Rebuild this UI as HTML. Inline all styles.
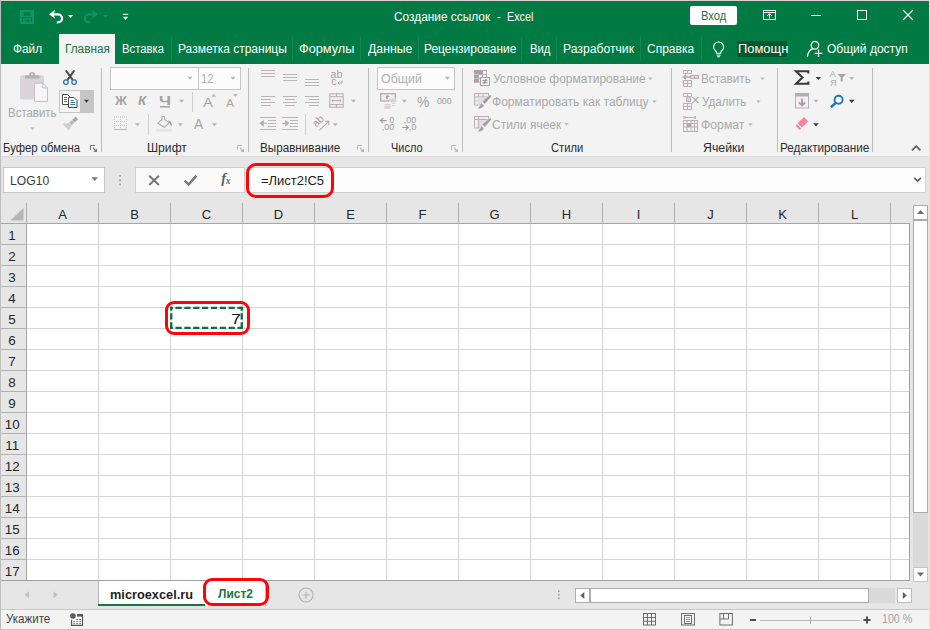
<!DOCTYPE html>
<html lang="ru"><head><meta charset="utf-8"><title>Создание ссылок - Excel</title><style>

html,body{margin:0;padding:0;}
body{width:930px;height:630px;overflow:hidden;position:relative;background:#e6e6e6;
 font-family:"Liberation Sans",sans-serif;}
.b{position:absolute;box-sizing:border-box;}
.t{position:absolute;white-space:nowrap;transform-origin:0 0;line-height:normal;}
svg{position:absolute;overflow:visible;}

</style></head><body>
<div class="b" style="left:0px;top:0px;width:930px;height:64px;background:#017a43;"></div>
<div class="b" style="left:59px;top:34px;width:56px;height:30px;background:#f3f3f3;"></div>
<div class="b" style="left:690px;top:6px;width:47px;height:19px;background:#fff;border-radius:2px;"></div>
<div class="b" style="left:737px;top:41px;width:50px;height:16px;background:#00592f;"></div>
<div class="b" style="left:171px;top:37px;width:1px;height:24px;background:#17844f;"></div>
<div class="b" style="left:292px;top:37px;width:1px;height:24px;background:#17844f;"></div>
<div class="b" style="left:360px;top:37px;width:1px;height:24px;background:#17844f;"></div>
<div class="b" style="left:418px;top:37px;width:1px;height:24px;background:#17844f;"></div>
<div class="b" style="left:521px;top:37px;width:1px;height:24px;background:#17844f;"></div>
<div class="b" style="left:556px;top:37px;width:1px;height:24px;background:#17844f;"></div>
<div class="b" style="left:640px;top:37px;width:1px;height:24px;background:#17844f;"></div>
<div class="b" style="left:701px;top:37px;width:1px;height:24px;background:#17844f;"></div>
<div class="b" style="left:0px;top:64px;width:930px;height:93px;background:#f3f3f3;border-bottom:1px solid #d9d9d9;"></div>
<div class="b" style="left:101px;top:68px;width:1px;height:84px;background:#bcbcbc;"></div>
<div class="b" style="left:248px;top:68px;width:1px;height:84px;background:#bcbcbc;"></div>
<div class="b" style="left:368px;top:68px;width:1px;height:84px;background:#bcbcbc;"></div>
<div class="b" style="left:462px;top:68px;width:1px;height:84px;background:#bcbcbc;"></div>
<div class="b" style="left:671px;top:68px;width:1px;height:84px;background:#bcbcbc;"></div>
<div class="b" style="left:777px;top:68px;width:1px;height:84px;background:#bcbcbc;"></div>
<div class="b" style="left:872px;top:68px;width:1px;height:84px;background:#bcbcbc;"></div>
<div class="b" style="left:59px;top:90px;width:22px;height:23px;background:#f3f3f3;border:1px solid #c6c6c6;"></div>
<div class="b" style="left:80px;top:90px;width:14px;height:23px;background:#c6c6c6;"></div>
<div class="b" style="left:110px;top:67px;width:89px;height:23px;background:#fcfcfc;border:1px solid #c6c6c6;"></div>
<div class="b" style="left:198px;top:67px;width:43px;height:23px;background:#fcfcfc;border:1px solid #c6c6c6;"></div>
<div class="b" style="left:192px;top:92px;width:1px;height:20px;background:#cfcfcf;"></div>
<div class="b" style="left:148px;top:114px;width:1px;height:21px;background:#cfcfcf;"></div>
<div class="b" style="left:305px;top:114px;width:1px;height:21px;background:#cfcfcf;"></div>
<div class="b" style="left:377px;top:67px;width:78px;height:23px;background:#fcfcfc;border:1px solid #c6c6c6;"></div>
<div class="b" style="left:3px;top:167px;width:102px;height:26px;background:#fff;border:1px solid #c8c8c8;"></div>
<div class="b" style="left:135px;top:167px;width:110px;height:26px;background:#fafafa;border:1px solid #d0d0d0;"></div>
<div class="b" style="left:246px;top:167px;width:680px;height:26px;background:#fdfdfd;border:1px solid #d0d0d0;"></div>
<div class="b" style="left:27px;top:224px;width:883px;height:357px;background-color:#fff;background-image:linear-gradient(to right,#d4d4d4 1px,transparent 1px),linear-gradient(to bottom,#d4d4d4 1px,transparent 1px);background-size:72px 21px;background-position:71px 20px;"></div>
<div class="b" style="left:1px;top:203px;width:909px;height:21px;background-color:#e6e6e6;background-image:linear-gradient(to right,#b2b2b2 1px,transparent 1px);background-size:72px 21px;background-position:25px 0;"></div>
<div class="b" style="left:1px;top:223px;width:909px;height:1px;background:#a6a6a6;"></div>
<div class="b" style="left:1px;top:224px;width:26px;height:357px;background-color:#e6e6e6;border-right:1px solid #a6a6a6;background-image:linear-gradient(to bottom,#b2b2b2 1px,transparent 1px);background-size:72px 21px;background-position:0 20px;"></div>
<div class="b" style="left:909px;top:224px;width:1px;height:357px;background:#a0a0a0;"></div>
<div class="b" style="left:1px;top:580px;width:909px;height:1px;background:#a0a0a0;"></div>
<div class="b" style="left:913px;top:205px;width:15px;height:15px;background:#fff;border:1px solid #adadad;"></div>
<div class="b" style="left:913px;top:220px;width:15px;height:293px;background:#fff;border:1px solid #ababab;"></div>
<div class="b" style="left:913px;top:513px;width:15px;height:54px;background:#dadada;"></div>
<div class="b" style="left:913px;top:567px;width:15px;height:15px;background:#fff;border:1px solid #c6c6c6;"></div>
<div class="b" style="left:575px;top:588px;width:15px;height:15px;background:#fff;border:1px solid #adadad;"></div>
<div class="b" style="left:590px;top:588px;width:279px;height:15px;background:#fff;border:1px solid #ababab;"></div>
<div class="b" style="left:869px;top:588px;width:26px;height:15px;background:#dadada;"></div>
<div class="b" style="left:897px;top:588px;width:15px;height:15px;background:#fff;border:1px solid #bdbdbd;"></div>
<div class="b" style="left:98px;top:581px;width:168px;height:25px;background:#fff;border-left:1px solid #b5b5b5;border-right:1px solid #b5b5b5;"></div>
<div class="b" style="left:98px;top:604px;width:107px;height:2px;background:#1e7145;"></div>
<div class="b" style="left:0px;top:609px;width:930px;height:21px;background:#f3f3f3;border-top:1px solid #c8c8c8;"></div>
<div class="b" style="left:0px;top:0px;width:930px;height:1px;background:#d9d3d6;"></div>
<div class="b" style="left:0px;top:0px;width:1px;height:630px;background:#bdbdbd;"></div>
<div class="b" style="left:929px;top:0px;width:1px;height:630px;background:#e4e4e4;"></div>
<div class="b" style="left:0px;top:629px;width:930px;height:1px;background:#c6c6c6;"></div>
<svg width="930" height="630" viewBox="0 0 930 630" style="left:0;top:0"><path d="M21 11h12v12h-12z" fill="none" stroke="#109468" stroke-width="2" />
<path d="M23 11v5.5h8v-5.5" fill="none" stroke="#109468" stroke-width="1.6" />
<path d="M24 23v-4h6v4M26 22.5v-1.5" fill="none" stroke="#109468" stroke-width="1.6" />
<path d="M55.300 9.800L49 14.300L55.300 18.800L53.600 14.300z" fill="#fff" />
<path d="M52.500 14.300H57.800a4.300 4 0 0 1 0 8H56.800" fill="none" stroke="#fff" stroke-width="2.2" />
<path d="M68.1 14.899999999999999h5l-2.5 3z" fill="#fff"/>
<path d="M91.700 9.800L98 14.300L91.700 18.800L93.400 14.300z" fill="#109468" />
<path d="M94.500 14.300H89.200a4.300 4 0 0 0 0 8H90.200" fill="none" stroke="#109468" stroke-width="2.2" />
<path d="M103.0 14.899999999999999h5l-2.5 3z" fill="#109468"/>
<path d="M122.8 14.3L128.2 14.3" stroke="#fff" stroke-width="1" fill="none"/>
<path d="M122.8 16.7h5.4l-2.7 3.2z" fill="#fff"/>
<rect x="763.5" y="10.5" width="12" height="9" fill="none" stroke="#fff" stroke-width="1" />
<path d="M763 12.5L776 12.5" stroke="#fff" stroke-width="1" fill="none"/>
<path d="M769.5 18.5v-4.5M767.3 15.8l2.2-2.2l2.2 2.2" fill="none" stroke="#fff" stroke-width="1" />
<path d="M811 15.5L821 15.5" stroke="#fff" stroke-width="1" fill="none"/>
<rect x="857.5" y="10.5" width="9" height="9" fill="none" stroke="#fff" stroke-width="1" />
<path d="M903 10L913 20M913 10L903 20" fill="none" stroke="#fff" stroke-width="1.1" />
<path d="M718.6 42a4.9 4.9 0 0 1 3.1 8.7c-.8.8-1 1.5-1 2.6h-4.2c0-1.100-.2-1.800-1-2.600a4.900 4.900 0 0 1 3.100-8.700z" fill="none" stroke="#fff" stroke-width="1.1" />
<path d="M716.6 55.1L720.6 55.1" stroke="#fff" stroke-width="1" fill="none"/>
<path d="M717.2 56.8L720 56.8" stroke="#fff" stroke-width="1" fill="none"/>
<path d="M815 49.200a3.900 3.900 0 1 0-.1 0M812.600 48.600c-2.600 1.200-4.800 4.400-5.200 8" fill="none" stroke="#fff" stroke-width="1.2" />
<path d="M818.5 49.500v7.600M814.700 53.300h7.600" fill="none" stroke="#fff" stroke-width="1.3" />
<rect x="20" y="75.5" width="24" height="24" fill="#dad3d7" rx="1.500"/>
<path d="M25 78.500v-3.300h4a3.100 3.100 0 0 1 6.200 0h4v3.300z" fill="#b7afb3" />
<circle cx="32.100" cy="74.300" r="1" fill="#ece7ea"/>
<path d="M34.500 83.200h8.300l4.700 4.700v13.600h-13z" fill="#f9f4f7" stroke="#c7bfc3" stroke-width="1" />
<path d="M42.800 83.200v4.700h4.700" fill="none" stroke="#c7bfc3" stroke-width="1" />
<path d="M30.0 127.30000000000001h5l-2.5 3z" fill="#c4c4c4"/>
<path d="M65.800 70.300L72.900 80.200M74.400 70.300L67.300 80.200" fill="none" stroke="#4c4c4c" stroke-width="2" />
<circle cx="65.9" cy="82.1" r="2.3" fill="none" stroke="#2e75b6" stroke-width="1.3"/>
<circle cx="74.1" cy="82.1" r="2.3" fill="none" stroke="#2e75b6" stroke-width="1.3"/>
<path d="M62.500 94.500h5l2.500 2.500v7.500h-7.500z" fill="#fff" stroke="#4a4a4a" stroke-width="1" />
<path d="M68.500 97.500h5.500l3 3v7h-8.500z" fill="#fff" stroke="#4a4a4a" stroke-width="1" />
<path d="M64 97.5L67 97.5" stroke="#2e75b6" stroke-width="1" fill="none"/>
<path d="M64 99.5L67 99.5" stroke="#2e75b6" stroke-width="1" fill="none"/>
<path d="M64 101.5L67 101.5" stroke="#2e75b6" stroke-width="1" fill="none"/>
<path d="M70.5 102.5L75 102.5" stroke="#2e75b6" stroke-width="1" fill="none"/>
<path d="M70.5 104.5L75 104.5" stroke="#2e75b6" stroke-width="1" fill="none"/>
<path d="M70.5 100.5L73.5 100.5" stroke="#2e75b6" stroke-width="1" fill="none"/>
<path d="M84.0 99.8h5l-2.5 3z" fill="#3a3a3a"/>
<path d="M75.600 116.700l2.500 2.500l-3.500 3.200l-2.500-2.500z" fill="#aba3a7" />
<path d="M71.700 120.200l2.600 2.600l-2.600 2.500l-2.600-2.600z" fill="#bdb5b9" />
<path d="M68.700 123.100l2.700 2.700l-2.300 4.800l-6.900-6.800z" fill="#d3cbcf" />
<path d="M90.5 150V145.5H95" fill="none" stroke="#777" stroke-width="1" />
<path d="M93 148L96.5 151.5" fill="none" stroke="#777" stroke-width="1.2" />
<path d="M97 148.5V152H93.5z" fill="#777" />
<path d="M237.5 150V145.5H242" fill="none" stroke="#b9b9b9" stroke-width="1" />
<path d="M240 148L243.5 151.5" fill="none" stroke="#b9b9b9" stroke-width="1.2" />
<path d="M244 148.5V152H240.5z" fill="#b9b9b9" />
<path d="M357.5 150V145.5H362" fill="none" stroke="#b9b9b9" stroke-width="1" />
<path d="M360 148L363.5 151.5" fill="none" stroke="#b9b9b9" stroke-width="1.2" />
<path d="M364 148.5V152H360.5z" fill="#b9b9b9" />
<path d="M451.5 150V145.5H456" fill="none" stroke="#b9b9b9" stroke-width="1" />
<path d="M454 148L457.5 151.5" fill="none" stroke="#b9b9b9" stroke-width="1.2" />
<path d="M458 148.5V152H454.5z" fill="#b9b9b9" />
<path d="M187.5 76.7h5l-2.5 3z" fill="#b5b5b5"/>
<path d="M230.5 76.7h5l-2.5 3z" fill="#b5b5b5"/>
<path d="M160 106.8L170 106.8" stroke="#a3a3a3" stroke-width="1.5" fill="none"/>
<path d="M179.0 99.8h5l-2.5 3z" fill="#b5b5b5"/>
<path d="M211.2 96.7h5l-2.5 -3z" fill="#b5b5b5"/>
<path d="M232.8 93.9h5l-2.5 3z" fill="#b5b5b5"/>
<path d="M114 117H127" stroke="#cbbfc6" stroke-width="1" stroke-dasharray="1 1" fill="none"/>
<path d="M114 121.5H127" stroke="#cbbfc6" stroke-width="1" stroke-dasharray="1 1" fill="none"/>
<path d="M114 125.5H127" stroke="#cbbfc6" stroke-width="1" stroke-dasharray="1 1" fill="none"/>
<path d="M114.5 117V129" stroke="#cbbfc6" stroke-width="1" stroke-dasharray="1 1" fill="none"/>
<path d="M120.5 117V129" stroke="#cbbfc6" stroke-width="1" stroke-dasharray="1 1" fill="none"/>
<path d="M126.5 117V129" stroke="#cbbfc6" stroke-width="1" stroke-dasharray="1 1" fill="none"/>
<path d="M114 129.5L127 129.5" stroke="#c3b9be" stroke-width="1.2" fill="none"/>
<path d="M134.9 123.3h5l-2.5 3z" fill="#b5b5b5"/>
<path d="M163 118.400l6.300 4.200l-5 4.700l-6.300-4.200z" fill="#f6f1f4" stroke="#aea6aa" stroke-width="1.1" />
<path d="M161.900 121v-4.600h2.600v3.400" fill="#f3f3f3" stroke="#aea6aa" stroke-width="1" />
<path d="M168.300 120.300c2.600.600 3.900 3 3.600 6.600c-1.300-1.700-1.900-3-2.600-4.300z" fill="#a59da1" />
<rect x="156" y="128.8" width="16" height="3" fill="#e9e1e5" />
<path d="M177.8 123.3h5l-2.5 3z" fill="#b5b5b5"/>
<path d="M212.0 123.3h5l-2.5 3z" fill="#b5b5b5"/>
<path d="M261 70.5L275 70.5" stroke="#bcb4b8" stroke-width="1" fill="none"/>
<path d="M261 73.5L275 73.5" stroke="#bcb4b8" stroke-width="1" fill="none"/>
<path d="M261 76.5L275 76.5" stroke="#bcb4b8" stroke-width="1" fill="none"/>
<path d="M283 74.5L297 74.5" stroke="#bcb4b8" stroke-width="1" fill="none"/>
<path d="M283 77.5L297 77.5" stroke="#bcb4b8" stroke-width="1" fill="none"/>
<path d="M283 80.5L297 80.5" stroke="#bcb4b8" stroke-width="1" fill="none"/>
<path d="M305 79.5L319 79.5" stroke="#bcb4b8" stroke-width="1" fill="none"/>
<path d="M305 82.5L319 82.5" stroke="#bcb4b8" stroke-width="1" fill="none"/>
<path d="M305 85.5L319 85.5" stroke="#bcb4b8" stroke-width="1" fill="none"/>
<path d="M261 96.5L275 96.5" stroke="#bcb4b8" stroke-width="1" fill="none"/>
<path d="M283 96.5L297 96.5" stroke="#bcb4b8" stroke-width="1" fill="none"/>
<path d="M305 96.5L319 96.5" stroke="#bcb4b8" stroke-width="1" fill="none"/>
<path d="M261 99.5L271 99.5" stroke="#bcb4b8" stroke-width="1" fill="none"/>
<path d="M285 99.5L295 99.5" stroke="#bcb4b8" stroke-width="1" fill="none"/>
<path d="M309 99.5L319 99.5" stroke="#bcb4b8" stroke-width="1" fill="none"/>
<path d="M261 102.5L275 102.5" stroke="#bcb4b8" stroke-width="1" fill="none"/>
<path d="M283 102.5L297 102.5" stroke="#bcb4b8" stroke-width="1" fill="none"/>
<path d="M305 102.5L319 102.5" stroke="#bcb4b8" stroke-width="1" fill="none"/>
<path d="M261 105.5L271 105.5" stroke="#bcb4b8" stroke-width="1" fill="none"/>
<path d="M285 105.5L295 105.5" stroke="#bcb4b8" stroke-width="1" fill="none"/>
<path d="M309 105.5L319 105.5" stroke="#bcb4b8" stroke-width="1" fill="none"/>
<text x="330.600" y="77.600" font-family="Liberation Sans" font-size="10.500" fill="#a9a1a5" textLength="12" lengthAdjust="spacingAndGlyphs">ab</text>
<text x="331.300" y="85.100" font-family="Liberation Sans" font-size="10.500" fill="#a9a1a5">c</text>
<path d="M342 80.300v2.700h-3.800M339.700 81.300l-1.700 1.700l1.700 1.700" fill="none" stroke="#a9a1a5" stroke-width="0.9" />
<rect x="329.8" y="93.8" width="13.4" height="13.5" fill="#f6eff3" stroke="#b9b1b5" stroke-width="1.1" />
<path d="M329.8 96.7L343.2 96.7" stroke="#b9b1b5" stroke-width="1.1" fill="none"/>
<path d="M329.8 104.5L343.2 104.5" stroke="#b9b1b5" stroke-width="1.1" fill="none"/>
<path d="M336.5 93.8L336.5 96.7" stroke="#b9b1b5" stroke-width="1.1" fill="none"/>
<path d="M336.5 104.5L336.5 107.3" stroke="#b9b1b5" stroke-width="1.1" fill="none"/>
<path d="M332 100.600h9M333.500 99.100l-1.600 1.500l1.600 1.500M339.500 99.100l1.600 1.500l-1.600 1.500" fill="none" stroke="#b0a8ac" stroke-width="1" />
<path d="M350.9 99.8h5l-2.5 3z" fill="#b5b5b5"/>
<path d="M260 117.5L276 117.5" stroke="#bcb4b8" stroke-width="1" fill="none"/>
<path d="M260 129.5L276 129.5" stroke="#bcb4b8" stroke-width="1" fill="none"/>
<path d="M268 120.5L276 120.5" stroke="#bcb4b8" stroke-width="1" fill="none"/>
<path d="M268 123.5L276 123.5" stroke="#bcb4b8" stroke-width="1" fill="none"/>
<path d="M268 126.5L276 126.5" stroke="#bcb4b8" stroke-width="1" fill="none"/>
<path d="M282 117.5L298 117.5" stroke="#bcb4b8" stroke-width="1" fill="none"/>
<path d="M282 129.5L298 129.5" stroke="#bcb4b8" stroke-width="1" fill="none"/>
<path d="M290 120.5L298 120.5" stroke="#bcb4b8" stroke-width="1" fill="none"/>
<path d="M290 123.5L298 123.5" stroke="#bcb4b8" stroke-width="1" fill="none"/>
<path d="M290 126.5L298 126.5" stroke="#bcb4b8" stroke-width="1" fill="none"/>
<path d="M267 123.300h-5M263.200 120.900l-2.900 2.400l2.900 2.400z" fill="#b4acb0" stroke="#b4acb0" stroke-width="1.1" />
<path d="M282 123.300h5M285.800 120.900l2.900 2.400l-2.900 2.400z" fill="#b4acb0" stroke="#b4acb0" stroke-width="1.1" />
<text transform="translate(316.300,127.600) rotate(-45)" font-family="Liberation Sans" font-size="10.500" fill="#a9a1a5">ab</text>
<path d="M319.500 130.200l8.800-8.300M324.800 121.300h4v4" fill="none" stroke="#b0a8ac" stroke-width="1.1" />
<path d="M332.8 123.3h5l-2.5 3z" fill="#b5b5b5"/>
<path d="M444.9 76.7h5l-2.5 3z" fill="#b5b5b5"/>
<rect x="380.7" y="93.7" width="14.7" height="7.3" fill="#f3ebef" stroke="#b7afb3" stroke-width="1.4" />
<circle cx="387.700" cy="97.200" r="2" fill="#aaa2a6"/>
<ellipse cx="389.200" cy="98" rx="1.600" ry="1.200" fill="#f3ebef"/>
<ellipse cx="392.6" cy="99.4" rx="3.400" ry="1.100" fill="#d2cace" stroke="#f3f3f3" stroke-width=".4"/>
<ellipse cx="392.6" cy="101.2" rx="3.400" ry="1.100" fill="#d2cace" stroke="#f3f3f3" stroke-width=".4"/>
<ellipse cx="387.5" cy="104.8" rx="3.400" ry="1" fill="#d2cace" stroke="#f3f3f3" stroke-width=".4"/>
<ellipse cx="387.5" cy="106.4" rx="3.400" ry="1" fill="#d2cace" stroke="#f3f3f3" stroke-width=".4"/>
<ellipse cx="387.5" cy="108" rx="3.400" ry="1" fill="#d2cace" stroke="#f3f3f3" stroke-width=".4"/>
<path d="M391.8 103.2L395.8 103.2" stroke="#d9d1d5" stroke-width="1" fill="none"/>
<path d="M391.8 105.6L394.8 105.6" stroke="#d9d1d5" stroke-width="1" fill="none"/>
<path d="M401.8 99.8h5l-2.5 3z" fill="#b5b5b5"/>
<path d="M380.300 120.600h6.300M383.100 118.200l-2.700 2.400l2.700 2.400" fill="none" stroke="#9c9c9c" stroke-width="1.1" />
<text x="389.5" y="122.9" font-family="Liberation Sans" font-size="8.5" fill="#9c9c9c" textLength="4.7" lengthAdjust="spacingAndGlyphs">0</text>
<text x="381.8" y="130.1" font-family="Liberation Sans" font-size="8.5" fill="#9c9c9c" textLength="12.4" lengthAdjust="spacingAndGlyphs">,00</text>
<text x="403.8" y="122.9" font-family="Liberation Sans" font-size="8.5" fill="#9c9c9c" textLength="12.4" lengthAdjust="spacingAndGlyphs">,00</text>
<path d="M402.200 127.500h6.300M405.700 125.100l2.700 2.400l-2.700 2.400" fill="none" stroke="#9c9c9c" stroke-width="1.1" />
<text x="408.7" y="130.1" font-family="Liberation Sans" font-size="8.5" fill="#9c9c9c" textLength="7.6" lengthAdjust="spacingAndGlyphs">,0</text>
<rect x="474.5" y="70.5" width="12" height="11.5" fill="#f6f1f4" stroke="#b8b0b4" stroke-width="1" />
<path d="M474.500 74.500h12M474.500 78.500h12M478.500 70.500v11.500M482.500 70.500v11.500" fill="none" stroke="#b8b0b4" stroke-width="1" />
<rect x="474" y="70" width="9" height="4.5" fill="#aaa2a6" />
<rect x="474" y="70" width="4.5" height="12.5" fill="#aaa2a6" />
<path d="M474 74.5L478.5 74.5" stroke="#d8d1d5" stroke-width="0.8" fill="none"/>
<path d="M474 78.5L478.5 78.5" stroke="#d8d1d5" stroke-width="0.8" fill="none"/>
<rect x="480.5" y="77.5" width="9" height="8" fill="#fbf7f9" stroke="#aaa2a6" stroke-width="1.1" />
<path d="M482.500 80.300h5M482.500 82.700h5M486.200 78.900l-2.400 5.200" fill="none" stroke="#8f878b" stroke-width="1" />
<rect x="474.5" y="93.5" width="14" height="11.5" fill="#f4ecf0" stroke="#b8b0b4" stroke-width="1" />
<path d="M474.500 97h14M474.500 101h14M478.500 93.500v11.500M483 93.500v11.500" fill="none" stroke="#b8b0b4" stroke-width="1" />
<rect x="479" y="97.5" width="9" height="7" fill="#e4dce0" />
<path d="M478.500 97v8M474.500 101h14M483 97v8" fill="none" stroke="#f4ecf0" stroke-width="0.6" />
<path d="M479 106l12.500-13.500v14z" fill="#f3f3f3" />
<path d="M490 95l1.300 1.300l-6.400 7.600l-2.500-2.500z" fill="#a59da1" />
<path d="M481.700 103.1l2.300 2.300c-1.200 2.200-3.400 3.100-6.300 3.100c1.800-1.200 2.200-3.600 4-5.400z" fill="#aaa2a6" />
<rect x="474.5" y="116.5" width="14" height="11.5" fill="#f4ecf0" stroke="#b8b0b4" stroke-width="1" />
<path d="M474.500 119.500h14M478.500 116.500v11.500" fill="none" stroke="#b8b0b4" stroke-width="1" />
<rect x="479" y="120" width="9" height="7.5" fill="#e4dce0" />
<path d="M479 129l12.500-13.500v14z" fill="#f3f3f3" />
<path d="M490 118l1.300 1.300l-6.400 7.600l-2.500-2.500z" fill="#a59da1" />
<path d="M481.700 126.1l2.300 2.300c-1.200 2.200-3.400 3.100-6.300 3.100c1.800-1.200 2.200-3.600 4-5.400z" fill="#aaa2a6" />
<path d="M648.1 77.39999999999999h4.6l-2.3 2.8z" fill="#bcbcbc"/>
<path d="M652.2 100.39999999999999h4.6l-2.3 2.8z" fill="#bcbcbc"/>
<path d="M564.2 123.0h4.6l-2.3 2.8z" fill="#bcbcbc"/>
<path d="M683.5 70.5h8v3h-8zM687.5 70.5v3" fill="#f6f2f4" stroke="#b8b0b4" stroke-width="1" />
<path d="M683.5 80.5h8v6h-8zM683.5 83.5h8M687.5 80.5v6" fill="#f6f2f4" stroke="#b8b0b4" stroke-width="1" />
<rect x="690.5" y="75.5" width="8" height="3" fill="#ddd6da" stroke="#b8b0b4" stroke-width="1" />
<path d="M694.5 75.5L694.5 78.5" stroke="#b8b0b4" stroke-width="1" fill="none"/>
<path d="M690 77h-6.500M686.200 74.600l-2.700 2.400l2.700 2.400" fill="none" stroke="#aea6aa" stroke-width="1.3" />
<path d="M683.5 93.5h8v3h-8zM687.5 93.5v3" fill="#f6f2f4" stroke="#b8b0b4" stroke-width="1" />
<path d="M683.5 103.5h8v6h-8zM683.5 106.5h8M687.5 103.5v6" fill="#f6f2f4" stroke="#b8b0b4" stroke-width="1" />
<rect x="686.5" y="98" width="4" height="3.5" fill="#ddd6da" stroke="#b8b0b4" stroke-width="1" />
<path d="M692.300 96.800l6.200 6.400M698.500 96.800l-6.200 6.400" fill="none" stroke="#aea6aa" stroke-width="1.2" />
<path d="M684 117.500h11.500M684 116v3M695.500 116v3M685.800 116.300l-1.300 1.200l1.300 1.200M693.700 116.300l1.300 1.200l-1.300 1.200" fill="none" stroke="#b8b0b4" stroke-width="0.9" />
<rect x="683.5" y="120.5" width="14" height="11" fill="#f6f2f4" stroke="#b8b0b4" stroke-width="1" />
<path d="M683.500 123.500h14M683.500 127h14M687 120.500v11M691 120.500v11M694.500 120.500v11" fill="none" stroke="#b8b0b4" stroke-width="1" />
<rect x="687" y="123.5" width="4" height="3.5" fill="#aea6aa" />
<path d="M760.2 77.39999999999999h4.6l-2.3 2.8z" fill="#bcbcbc"/>
<path d="M756.2 100.39999999999999h4.6l-2.3 2.8z" fill="#bcbcbc"/>
<path d="M748.2 123.19999999999999h4.6l-2.3 2.8z" fill="#bcbcbc"/>
<path d="M808.300 73.400v-2.200h-12.300l6.500 6.300l-6.500 6.300h12.300v-2.200" fill="none" stroke="#3a3a3a" stroke-width="2.1" stroke-linejoin="miter"/>
<path d="M815.55 76.9h5.5l-2.75 3.2z" fill="#3a3a3a"/>
<text x="829.8" y="77" font-family="Liberation Sans" font-size="9" fill="#ababab">A</text>
<text x="830" y="85.5" font-family="Liberation Sans" font-size="9" fill="#ababab">Я</text>
<path d="M837.500 74h8.500l-3.200 3.600v3.900h-2.100v-3.900z" fill="#aaa4a7" />
<path d="M849.2 77.0h5l-2.5 3z" fill="#b5b5b5"/>
<rect x="795.5" y="93.5" width="13" height="14.5" fill="#f6eff3" stroke="#b8b0b4" stroke-width="1" />
<rect x="795" y="93" width="14" height="3.5" fill="#b5adb1" />
<path d="M802 98.500v7M798.800 102.300l3.200 3.200l3.200-3.200" fill="none" stroke="#a8a0a4" stroke-width="1.9" />
<path d="M813.5 99.8h5l-2.5 3z" fill="#b5b5b5"/>
<circle cx="838.600" cy="99.700" r="4" fill="#fff" stroke="#1f77b9" stroke-width="1.900"/>
<path d="M835.800 102.900l-5 4.300" fill="none" stroke="#1f77b9" stroke-width="2.5" />
<path d="M848.95 99.7h5.5l-2.75 3.2z" fill="#3a3a3a"/>
<path d="M804 117l4.200 4.200l-6.300 6.300l-4.200-4.200z" fill="#fb8399" />
<path d="M797 124.200l4.200 4.200l-1.500 1.500l-4.200-4.200z" fill="#fb8399" />
<path d="M813.25 123.2h5.5l-2.75 3.2z" fill="#3a3a3a"/>
<path d="M912 150.300l4.200-4.200l4.200 4.200" fill="none" stroke="#5a5a5a" stroke-width="1.7" />
<path d="M91.4 177.29999999999998h6.6l-3.3 3.8z" fill="#777"/>
<rect x="119.2" y="175.0" width="1.8" height="1.8" fill="#a2a2a2" />
<rect x="119.2" y="179.29999999999998" width="1.8" height="1.8" fill="#a2a2a2" />
<rect x="119.2" y="183.4" width="1.8" height="1.8" fill="#a2a2a2" />
<path d="M149.200 175.800l9.700 9.200M158.900 175.800l-9.700 9.200" fill="none" stroke="#747474" stroke-width="1.9" />
<path d="M184.600 180.600l4 4l7.800-9" fill="none" stroke="#787878" stroke-width="2.4" />
<path d="M914.300 177.800l3.300 3.300l3.300-3.300" fill="none" stroke="#555" stroke-width="1.6" />
<path d="M23.500 208v12.500h-13.200z" fill="#b5b5b5" />
<path d="M170.100 307.95H242.900" stroke="#116d3b" stroke-width="2.300" stroke-dasharray="6.200 2.650" stroke-dashoffset="3.450" fill="none"/>
<path d="M170.100 327.85H242.900" stroke="#116d3b" stroke-width="2.300" stroke-dasharray="6.200 2.650" stroke-dashoffset="3.450" fill="none"/>
<path d="M171.25 306.800V329" stroke="#116d3b" stroke-width="2.300" stroke-dasharray="6.200 2.650" stroke-dashoffset="2.350" fill="none"/>
<path d="M241.75 306.800V329" stroke="#116d3b" stroke-width="2.300" stroke-dasharray="6.200 2.650" stroke-dashoffset="2.350" fill="none"/>
<path d="M917.0 214.0h7l-3.5 -4z" fill="#6b6b6b"/>
<path d="M917.0 572.5h7l-3.5 4z" fill="#6b6b6b"/>
<path d="M584.3 592.0v7l-4 -3.5z" fill="#5e5e5e"/>
<path d="M902.8 592.0v7l4 -3.5z" fill="#5e5e5e"/>
<path d="M29.05 591.3v7l-4.5 -3.5z" fill="#c2c2c2"/>
<path d="M53.55 591.3v7l4.5 -3.5z" fill="#c2c2c2"/>
<circle cx="306" cy="595" r="7" fill="none" stroke="#b4b4b4" stroke-width="1.200"/>
<path d="M302.500 595h7M306 591.500v7" fill="none" stroke="#b4b4b4" stroke-width="1.2" />
<rect x="558" y="590.5" width="1.6" height="1.6" fill="#9c9c9c" />
<rect x="558" y="594.0" width="1.6" height="1.6" fill="#9c9c9c" />
<rect x="558" y="597.5" width="1.6" height="1.6" fill="#9c9c9c" />
<path d="M71.600 620v5.400h10.900v-11" fill="none" stroke="#555" stroke-width="1.1" />
<rect x="72" y="617" width="10" height="8" fill="#fff" />
<path d="M71.600 620v5.400h10.900v-11" fill="none" stroke="#555" stroke-width="1.1" />
<rect x="77.2" y="614" width="5.8" height="2.6" fill="#555" />
<rect x="76.2" y="619.1" width="1.7" height="0.9" fill="#555" />
<rect x="79.2" y="619.1" width="1.7" height="0.9" fill="#555" />
<rect x="73.2" y="621.2" width="1.7" height="0.9" fill="#555" />
<rect x="76.2" y="621.2" width="1.7" height="0.9" fill="#555" />
<rect x="79.2" y="621.2" width="1.7" height="0.9" fill="#555" />
<rect x="73.2" y="623.2" width="1.7" height="0.9" fill="#555" />
<rect x="76.2" y="623.2" width="1.7" height="0.9" fill="#555" />
<rect x="79.2" y="623.2" width="1.7" height="0.9" fill="#555" />
<circle cx="72.900" cy="616" r="3.300" fill="#f3f3f3"/>
<circle cx="72.900" cy="616" r="2.800" fill="#5a5a5a"/>
<rect x="643.5" y="613.5" width="12" height="11.5" fill="none" stroke="#6e6e6e" stroke-width="1" />
<path d="M647.500 613.500v11.500M651.500 613.500v11.500M643.500 617.500h12M643.500 621.300h12" fill="none" stroke="#6e6e6e" stroke-width="1" />
<rect x="681.5" y="613.5" width="13" height="11.5" fill="none" stroke="#6e6e6e" stroke-width="1" />
<rect x="684.5" y="615.5" width="7" height="8" fill="#fff" stroke="#6e6e6e" stroke-width="1" />
<path d="M686 617.600h4M686 619.500h4M686 621.400h4" fill="none" stroke="#6e6e6e" stroke-width="0.8" />
<rect x="719.9" y="613.5" width="12.5" height="11.5" fill="none" stroke="#6e6e6e" stroke-width="1" />
<path d="M723.500 613.500v5.500h5v-5.500M719.900 619h3.600" fill="none" stroke="#6e6e6e" stroke-width="1" />
<path d="M750 620L756 620" stroke="#4f4f4f" stroke-width="2" fill="none"/>
<path d="M760 620.5L860 620.5" stroke="#b9b9b9" stroke-width="1" fill="none"/>
<path d="M810.5 617L810.5 624" stroke="#b0b0b0" stroke-width="1" fill="none"/>
<path d="M863.500 620h7M867 616.500v7" fill="none" stroke="#4f4f4f" stroke-width="2" /></svg>
<span class="t" style="font-size:12px;color:#ffffff;left:393.71px;top:10.20px;transform:scaleX(0.9896);">Создание ссылок</span>
<span class="t" style="font-size:12px;color:#ffffff;left:496.80px;top:10.20px;transform:scaleX(0.9500);">-</span>
<span class="t" style="font-size:12px;color:#ffffff;left:506.80px;top:10.20px;transform:scaleX(0.8964);">Excel</span>
<span class="t" style="font-size:12px;color:#1a7246;left:701.07px;top:9.20px;transform:scaleX(0.9308);">Вход</span>
<span class="t" style="font-size:12px;color:#ffffff;left:12.81px;top:42.10px;transform:scaleX(0.9857);">Файл</span>
<span class="t" style="font-size:12px;color:#1e7145;left:64.72px;top:42.10px;transform:scaleX(0.9841);">Главная</span>
<span class="t" style="font-size:12px;color:#ffffff;left:122.36px;top:42.10px;transform:scaleX(0.9409);">Вставка</span>
<span class="t" style="font-size:12px;color:#ffffff;left:178.00px;top:42.10px;transform:scaleX(1.0000);">Разметка страницы</span>
<span class="t" style="font-size:12px;color:#ffffff;left:298.94px;top:42.10px;transform:scaleX(1.0588);">Формулы</span>
<span class="t" style="font-size:12px;color:#ffffff;left:367.50px;top:42.10px;transform:scaleX(1.0233);">Данные</span>
<span class="t" style="font-size:12px;color:#ffffff;left:424.20px;top:42.10px;transform:scaleX(0.9978);">Рецензирование</span>
<span class="t" style="font-size:12px;color:#ffffff;left:529.56px;top:42.10px;transform:scaleX(0.9429);">Вид</span>
<span class="t" style="font-size:12px;color:#ffffff;left:562.99px;top:42.10px;transform:scaleX(1.0145);">Разработчик</span>
<span class="t" style="font-size:12px;color:#ffffff;left:647.00px;top:42.10px;transform:scaleX(1.0000);">Справка</span>
<span class="t" style="font-size:12px;color:#ffffff;left:737.52px;top:42.10px;transform:scaleX(1.0756);">Помощн</span>
<span class="t" style="font-size:12px;color:#ffffff;left:826.50px;top:42.20px;transform:scaleX(1.0013);">Общий доступ</span>
<span class="t" style="font-size:12px;color:#a9a9a9;left:7.74px;top:105.80px;transform:scaleX(0.9551);">Вставить</span>
<span class="t" style="font-size:12px;color:#2b2b2b;left:2.56px;top:140.60px;transform:scaleX(0.9437);">Буфер обмена</span>
<span class="t" style="font-size:12px;color:#b5adb1;left:200.65px;top:71.60px;transform:scaleX(0.9500);">12</span>
<span class="t" style="font-size:12px;color:#a3a3a3;font-weight:bold;left:115.00px;top:93.70px;transform:scaleX(1.0909);">Ж</span>
<span class="t" style="font-size:12px;color:#a3a3a3;font-weight:bold;font-style:italic;left:138.00px;top:93.70px;transform:scaleX(1.1250);">К</span>
<span class="t" style="font-size:12px;color:#a3a3a3;font-weight:bold;left:158.57px;top:93.70px;transform:scaleX(1.4286);">Ч</span>
<span class="t" style="font-size:13.5px;color:#a6a6a6;left:203.00px;top:94.50px;transform:scaleX(1.1111);">A</span>
<span class="t" style="font-size:10.5px;color:#a6a6a6;left:226.00px;top:96.50px;transform:scaleX(1.1429);">A</span>
<span class="t" style="font-size:14.8px;color:#a6a6a6;left:193.90px;top:115.90px;transform:scaleX(0.9400);">A</span>
<span class="t" style="font-size:12px;color:#2b2b2b;left:146.59px;top:140.60px;transform:scaleX(1.0105);">Шрифт</span>
<span class="t" style="font-size:12px;color:#2b2b2b;left:259.63px;top:140.60px;transform:scaleX(0.9728);">Выравнивание</span>
<span class="t" style="font-size:12px;color:#b5adb1;left:380.60px;top:71.60px;transform:scaleX(1.0359);">Общий</span>
<span class="t" style="font-size:15px;color:#a2a2a2;left:416.80px;top:92.80px;transform:scaleX(0.9308);">%</span>
<span class="t" style="font-size:9.2px;color:#9c9c9c;left:437.00px;top:95.80px;transform:scaleX(0.9533);">000</span>
<span class="t" style="font-size:12px;color:#2b2b2b;left:390.88px;top:140.60px;transform:scaleX(0.9152);">Число</span>
<span class="t" style="font-size:12px;color:#a9a9a9;left:493.00px;top:72.00px;transform:scaleX(1.0000);">Условное форматирование</span>
<span class="t" style="font-size:12px;color:#a9a9a9;left:492.00px;top:95.00px;transform:scaleX(1.0032);">Форматировать как таблицу</span>
<span class="t" style="font-size:12px;color:#a9a9a9;left:492.00px;top:117.60px;transform:scaleX(1.0000);">Стили ячеек</span>
<span class="t" style="font-size:12px;color:#2b2b2b;left:550.87px;top:140.60px;transform:scaleX(0.9303);">Стили</span>
<span class="t" style="font-size:12px;color:#a9a9a9;left:701.02px;top:71.80px;transform:scaleX(0.9796);">Вставить</span>
<span class="t" style="font-size:12px;color:#a9a9a9;left:702.00px;top:95.00px;transform:scaleX(0.9689);">Удалить</span>
<span class="t" style="font-size:12px;color:#a9a9a9;left:700.98px;top:118.00px;transform:scaleX(1.0190);">Формат</span>
<span class="t" style="font-size:12px;color:#2b2b2b;left:702.97px;top:140.60px;transform:scaleX(1.0256);">Ячейки</span>
<span class="t" style="font-size:12px;color:#2b2b2b;left:780.02px;top:140.60px;transform:scaleX(0.9756);">Редактирование</span>
<span class="t" style="font-size:12.5px;color:#3b3b3b;left:9.93px;top:173.80px;transform:scaleX(0.9718);">LOG10</span>
<span class="t" style="font-size:12.2px;color:#222;left:260.60px;top:173.70px;transform:scaleX(1.0627);">=Лист2!C5</span>
<span class="t" style="font-size:14.5px;color:#5f5f5f;font-weight:bold;font-style:italic;font-family:Liberation Serif,serif;left:221.30px;top:170.00px;transform:scaleX(1.0000);">f</span>
<span class="t" style="font-size:9.5px;color:#5f5f5f;font-weight:bold;font-style:italic;font-family:Liberation Serif,serif;left:225.80px;top:176.00px;transform:scaleX(1.0000);">x</span>
<span class="t" style="font-size:13px;color:#262626;left:58.16px;top:206.60px;transform:scaleX(1.0000);">A</span>
<span class="t" style="font-size:13px;color:#262626;left:130.16px;top:206.60px;transform:scaleX(1.0000);">B</span>
<span class="t" style="font-size:13px;color:#262626;left:201.80px;top:206.60px;transform:scaleX(1.0000);">C</span>
<span class="t" style="font-size:13px;color:#262626;left:273.80px;top:206.60px;transform:scaleX(1.0000);">D</span>
<span class="t" style="font-size:13px;color:#262626;left:346.16px;top:206.60px;transform:scaleX(1.0000);">E</span>
<span class="t" style="font-size:13px;color:#262626;left:418.52px;top:206.60px;transform:scaleX(1.0000);">F</span>
<span class="t" style="font-size:13px;color:#262626;left:489.44px;top:206.60px;transform:scaleX(1.0000);">G</span>
<span class="t" style="font-size:13px;color:#262626;left:561.80px;top:206.60px;transform:scaleX(1.0000);">H</span>
<span class="t" style="font-size:13px;color:#262626;left:636.69px;top:206.60px;transform:scaleX(1.0000);">I</span>
<span class="t" style="font-size:13px;color:#262626;left:707.25px;top:206.60px;transform:scaleX(1.0000);">J</span>
<span class="t" style="font-size:13px;color:#262626;left:778.16px;top:206.60px;transform:scaleX(1.0000);">K</span>
<span class="t" style="font-size:13px;color:#262626;left:850.88px;top:206.60px;transform:scaleX(1.0000);">L</span>
<span class="t" style="font-size:13.4px;color:#262626;left:8.27px;top:227.80px;transform:scaleX(1.0000);">1</span>
<span class="t" style="font-size:13.4px;color:#262626;left:8.27px;top:248.80px;transform:scaleX(1.0000);">2</span>
<span class="t" style="font-size:13.4px;color:#262626;left:8.27px;top:269.80px;transform:scaleX(1.0000);">3</span>
<span class="t" style="font-size:13.4px;color:#262626;left:8.27px;top:290.80px;transform:scaleX(1.0000);">4</span>
<span class="t" style="font-size:13.4px;color:#262626;left:8.27px;top:311.80px;transform:scaleX(1.0000);">5</span>
<span class="t" style="font-size:13.4px;color:#262626;left:8.27px;top:332.80px;transform:scaleX(1.0000);">6</span>
<span class="t" style="font-size:13.4px;color:#262626;left:8.27px;top:353.80px;transform:scaleX(1.0000);">7</span>
<span class="t" style="font-size:13.4px;color:#262626;left:8.27px;top:374.80px;transform:scaleX(1.0000);">8</span>
<span class="t" style="font-size:13.4px;color:#262626;left:8.27px;top:395.80px;transform:scaleX(1.0000);">9</span>
<span class="t" style="font-size:13.4px;color:#262626;left:4.75px;top:416.80px;transform:scaleX(1.0000);">10</span>
<span class="t" style="font-size:13.4px;color:#262626;left:5.25px;top:437.80px;transform:scaleX(1.0000);">11</span>
<span class="t" style="font-size:13.4px;color:#262626;left:4.75px;top:458.80px;transform:scaleX(1.0000);">12</span>
<span class="t" style="font-size:13.4px;color:#262626;left:4.75px;top:479.80px;transform:scaleX(1.0000);">13</span>
<span class="t" style="font-size:13.4px;color:#262626;left:4.75px;top:500.80px;transform:scaleX(1.0000);">14</span>
<span class="t" style="font-size:13.4px;color:#262626;left:4.75px;top:521.80px;transform:scaleX(1.0000);">15</span>
<span class="t" style="font-size:13.4px;color:#262626;left:4.75px;top:542.80px;transform:scaleX(1.0000);">16</span>
<span class="t" style="font-size:13.4px;color:#262626;left:4.75px;top:563.80px;transform:scaleX(1.0000);">17</span>
<span class="t" style="font-size:14px;color:#1a1a1a;left:230.72px;top:310.90px;transform:scaleX(1.2833);">7</span>
<span class="t" style="font-size:13px;color:#1f1f1f;font-weight:bold;left:109.52px;top:586.50px;transform:scaleX(0.9819);">microexcel.ru</span>
<span class="t" style="font-size:13px;color:#1e7145;font-weight:bold;left:218.00px;top:586.40px;transform:scaleX(0.9211);">Лист2</span>
<span class="t" style="font-size:12px;color:#444;left:5.80px;top:611.90px;transform:scaleX(0.9609);">Укажите</span>
<span class="t" style="font-size:12px;color:#a3a3a3;left:881.81px;top:612.00px;transform:scaleX(0.8879);">100 %</span>
<div class="b" style="left:246px;top:163px;width:88px;height:34.6px;border:3px solid #fb0509;border-radius:10px;"></div>
<div class="b" style="left:165px;top:300.5px;width:84.7px;height:34.4px;border:3px solid #fb0509;border-radius:9px;"></div>
<div class="b" style="left:202.5px;top:577.5px;width:66.5px;height:28.5px;border:3px solid #fb0509;border-radius:9px;"></div>
</body></html>
